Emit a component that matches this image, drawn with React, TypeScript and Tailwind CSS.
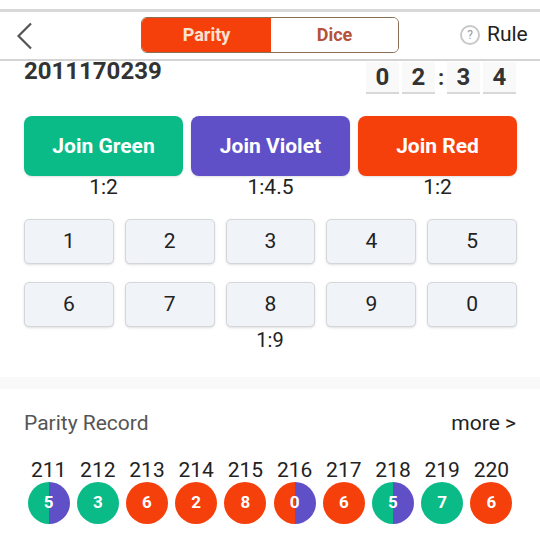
const font = { fontFamily: "Roboto, sans-serif" };

const GREEN = "bg-[#0abb87]";
const RED = "bg-[#f6400c]";

type Ball = { id: number; n: number; bg: string };

const balls: Ball[] = [
  { id: 211, n: 5, bg: "bg-[linear-gradient(90deg,#0abb87_50%,#5f50c8_50%)]" },
  { id: 212, n: 3, bg: GREEN },
  { id: 213, n: 6, bg: RED },
  { id: 214, n: 2, bg: RED },
  { id: 215, n: 8, bg: RED },
  { id: 216, n: 0, bg: "bg-[linear-gradient(90deg,#f6400c_50%,#5f50c8_50%)]" },
  { id: 217, n: 6, bg: RED },
  { id: 218, n: 5, bg: "bg-[linear-gradient(90deg,#0abb87_50%,#5f50c8_50%)]" },
  { id: 219, n: 7, bg: GREEN },
  { id: 220, n: 6, bg: RED },
];

function Digit({ v }: { v: string }) {
  return (
    <div className="w-[33px] h-[32px] flex items-center justify-center bg-[#f9f9f9] border-b-2 border-[#d8d8d8] text-[24px] font-bold text-[#333] leading-none">
      {v}
    </div>
  );
}

function Join({ label, odds, bg }: { label: string; odds: string; bg: string }) {
  return (
    <div className="flex-1 flex flex-col items-center">
      <div className={`w-full h-[60px] pt-[1px] rounded-lg flex items-center justify-center text-white text-[21px] font-bold shadow-sm ${bg}`}>
        {label}
      </div>
      <div className="h-[24px] flex items-center text-[21px] text-[#222]">{odds}</div>
    </div>
  );
}

function Num({ v }: { v: number }) {
  return (
    <div className="h-[45px] rounded-[5px] border border-[#d4d6da] bg-[#f0f3f8] flex items-center justify-center text-[21px] text-[#222] shadow-sm">
      {v}
    </div>
  );
}

export default function App() {
  return (
    <div style={font} className="w-[540px] h-[540px] overflow-hidden bg-white flex flex-col">
      <div className="h-[9px] bg-white shrink-0" />
      <header className="h-[52px] shrink-0 border-t-[3px] border-b-2 border-t-[#d8d8d8] border-b-[#d4d4d4] flex items-center bg-white relative">
        <div className="w-[141px] pl-[16px] shrink-0">
          <svg width="18" height="28" viewBox="0 0 18 28" fill="none" stroke="#555" strokeWidth="2.2">
            <path d="M15 1.5 L2.5 14 L15 26.5" />
          </svg>
        </div>
        <div className="w-[258px] h-[36px] flex rounded-md border border-[#8a6f55] overflow-hidden shrink-0 -mt-[2px]">
          <div className="w-[129px] bg-[#f6400c] flex items-center justify-center text-[#fbe3d0] font-bold text-[18px]">Parity</div>
          <div className="flex-1 bg-white flex items-center justify-center text-[#b5523a] font-bold text-[18px]">Dice</div>
        </div>
        <div className="ml-[61px] flex items-center gap-[7px] -mt-[2px]">
          <div className="w-[20px] h-[20px] rounded-full border-2 border-[#c8c8c8] flex items-center justify-center text-[12px] text-[#999] leading-none">?</div>
          <span className="text-[21px] text-[#222]">Rule</span>
        </div>
      </header>

      <div className="px-[24px] flex justify-between h-[55px] shrink-0">
        <div className="text-[24px] font-bold text-[#333] leading-none mt-[-2px]">2011170239</div>
        <div className="flex items-start gap-[3px] mt-[1px]">
          <Digit v="0" />
          <Digit v="2" />
          <div className="w-[6px] h-[32px] flex items-center justify-center text-[22px] font-bold text-[#333] leading-none">:</div>
          <Digit v="3" />
          <Digit v="4" />
        </div>
      </div>

      <div className="pl-[24px] pr-[23px] flex gap-[8px] shrink-0">
        <Join label="Join Green" odds="1:2" bg="bg-[#0abb87]" />
        <Join label="Join Violet" odds="1:4.5" bg="bg-[#5f50c8]" />
        <Join label="Join Red" odds="1:2" bg="bg-[#f6400c]" />
      </div>

      <div className="pl-[24px] pr-[23px] mt-[19px] grid grid-cols-5 gap-x-[11px] gap-y-[18px] shrink-0">
        {[1, 2, 3, 4, 5, 6, 7, 8, 9, 0].map((v) => (
          <Num key={v} v={v} />
        ))}
      </div>
      <div className="h-[26px] flex items-center justify-center text-[20px] text-[#222] shrink-0">1:9</div>

      <div className="mt-[24px] h-[12px] bg-[#f9f9f9] shrink-0" />

      <div className="px-[24px] mt-[23px] flex justify-between items-center h-[24px] shrink-0 text-[21px]">
        <span className="text-[#555]">Parity Record</span>
        <span className="text-[#222]">more &gt;</span>
      </div>

      <div className="px-[24px] mt-[22px] grid grid-cols-10 shrink-0">
        {balls.map((b) => (
          <div key={b.id} className="flex flex-col items-center">
            <div className="h-[24px] pt-[2px] flex items-center text-[21px] text-[#222]">{b.id}</div>
            <div className={`w-[42px] h-[42px] rounded-full flex items-center justify-center text-white text-[17px] font-bold ${b.bg}`}>
              {b.n}
            </div>
          </div>
        ))}
      </div>
    </div>
  );
}
